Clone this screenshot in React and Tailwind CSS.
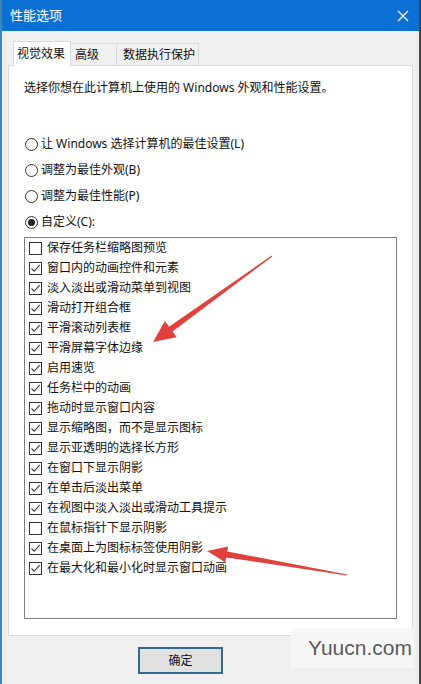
import React from 'react';

const radios = [
  { label: '让 Windows 选择计算机的最佳设置(L)', checked: false },
  { label: '调整为最佳外观(B)', checked: false },
  { label: '调整为最佳性能(P)', checked: false },
  { label: '自定义(C):', checked: true },
];

const effects = [
  { label: '保存任务栏缩略图预览', checked: false },
  { label: '窗口内的动画控件和元素', checked: true },
  { label: '淡入淡出或滑动菜单到视图', checked: true },
  { label: '滑动打开组合框', checked: true },
  { label: '平滑滚动列表框', checked: true },
  { label: '平滑屏幕字体边缘', checked: true },
  { label: '启用速览', checked: true },
  { label: '任务栏中的动画', checked: true },
  { label: '拖动时显示窗口内容', checked: true },
  { label: '显示缩略图，而不是显示图标', checked: true },
  { label: '显示亚透明的选择长方形', checked: true },
  { label: '在窗口下显示阴影', checked: true },
  { label: '在单击后淡出菜单', checked: true },
  { label: '在视图中淡入淡出或滑动工具提示', checked: true },
  { label: '在鼠标指针下显示阴影', checked: false },
  { label: '在桌面上为图标标签使用阴影', checked: true },
  { label: '在最大化和最小化时显示窗口动画', checked: true },
];

const Radio = ({ checked }) => (
  <span className="w-[13px] h-[13px] rounded-full border border-[#333] bg-white flex items-center justify-center shrink-0">
    {checked && <span className="w-[7px] h-[7px] rounded-full bg-[#222]" />}
  </span>
);

const Checkbox = ({ checked }) => (
  <span className="w-[13px] h-[13px] border border-[#333] bg-white flex items-center justify-center shrink-0">
    {checked && (
      <svg width="11" height="11" viewBox="0 0 11 11">
        <path d="M1.5 5.5 L4.2 8.3 L9.6 2.2" fill="none" stroke="#333" strokeWidth="1.1" />
      </svg>
    )}
  </span>
);

export default function App() {
  return (
    <div
      className="relative w-[421px] h-[684px] overflow-hidden flex flex-col bg-[#f0f0f0] border-l-2 border-l-[#3f86b4] border-r-2 border-r-[#444] text-[12px] text-[#111]"
      style={{ fontFamily: '"Noto Sans", "Noto Sans CJK SC", sans-serif' }}
    >
      {/* title bar */}
      <div className="h-[31px] bg-[#0b6fd3] flex items-center justify-between pl-[8px] pr-[10px] text-white text-[13px]">
        <span>性能选项</span>
        <svg width="12" height="12" viewBox="0 0 12 12">
          <path d="M1 1 L11 11 M11 1 L1 11" stroke="#fff" strokeWidth="1.2" />
        </svg>
      </div>

      <div className="px-[6px]">
        {/* tabs */}
        <div className="flex items-end h-[34px] pl-[5px]">
          <div className="relative z-10 w-[58px] h-[25px] bg-white border border-b-0 border-[#d9d9d9] pl-[3px] flex items-center -mb-px">
            视觉效果
          </div>
          <div className="w-[46px] h-[22px] border-t border-r border-[#d9d9d9] bg-[#f0f0f0] pl-[4px] flex items-center">
            高级
          </div>
          <div className="w-[82px] h-[22px] border-t border-r border-[#d9d9d9] bg-[#f0f0f0] pl-[6px] flex items-center">
            数据执行保护
          </div>
        </div>

        {/* panel */}
        <div className="h-[571px] bg-white border border-[#d9d9d9] pl-[15px] pt-[14px]">
          <p className="leading-[16px]">选择你想在此计算机上使用的 Windows 外观和性能设置。</p>

          <div className="mt-[35px] flex flex-col">
            {radios.map((r) => (
              <div key={r.label} className="h-[26px] flex items-center gap-[3px] pl-[1px]">
                <Radio checked={r.checked} />
                <span>{r.label}</span>
              </div>
            ))}
          </div>

          <div className="mt-[2px] w-[373px] h-[382px] border border-[#828282] bg-white pl-[4px]">
            {effects.map((e) => (
              <div key={e.label} className="h-[20px] flex items-center gap-[5px]">
                <Checkbox checked={e.checked} />
                <span>{e.label}</span>
              </div>
            ))}
          </div>
        </div>

        {/* footer */}
        <div className="flex pl-[130px] pt-[11px]">
          <button className="w-[85px] h-[27px] border-2 border-[#2f6b8c] bg-[#e1e1e1] text-[12px] text-[#111] flex items-center justify-center">
            确定
          </button>
        </div>
      </div>

      {/* red annotation arrows */}
      <svg className="absolute left-[-2px] top-0 pointer-events-none" width="421" height="684">
        <polygon
          points="271.7,255.6 169,326.7 164.9,321 153,342 176.7,337.2 172.6,331.5 272.3,256.4"
          fill="#e0413c"
        />
        <polygon
          points="347.1,574.5 227.2,551.4 228.1,546.5 207,551 225.3,562.3 226.2,557.4 346.9,575.5"
          fill="#e0413c"
        />
      </svg>

      {/* watermark */}
      <div className="absolute left-[289px] top-[628px] w-[123px] h-[40px] bg-[#f7f7f7]/90 flex items-center justify-end pr-[2px]">
        <span className="text-[21px] text-[#5a5a5a]" style={{ fontFamily: '"Liberation Sans", Arial, sans-serif' }}>
          Yuucn.com
        </span>
      </div>
    </div>
  );
}
